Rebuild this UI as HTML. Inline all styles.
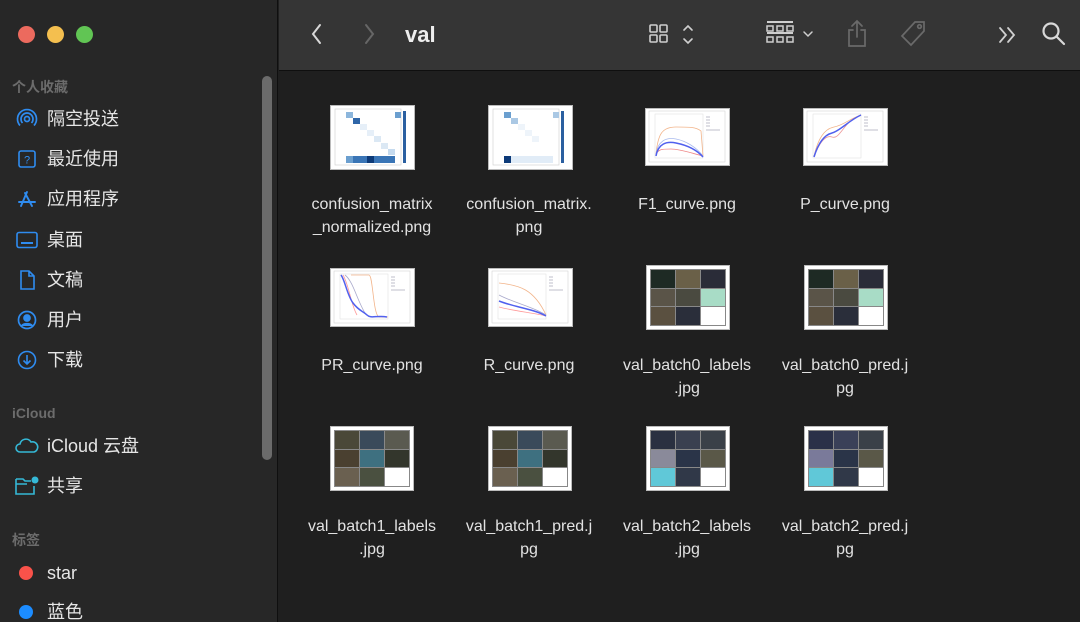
<!DOCTYPE html>
<html><head><meta charset="utf-8"><style>
*{margin:0;padding:0;box-sizing:border-box}
body{width:1080px;height:622px;overflow:hidden;background:#1f1f1f;font-family:"Liberation Sans","Noto Sans CJK SC",sans-serif;position:relative}
#side{position:absolute;left:0;top:0;width:278px;height:622px;background:#272727;border-right:1px solid #0f0f0f}
.tl{position:absolute;top:26px;width:17px;height:17px;border-radius:50%}
.hd{position:absolute;left:12px;font-size:14px;color:#6c6c6c;font-weight:bold}
.it{position:absolute;left:47px;font-size:18px;color:#e6e6e6;line-height:20px}
.ic{position:absolute;left:16px;width:22px;height:22px}
#scroll{position:absolute;left:262px;top:76px;width:10px;height:384px;border-radius:5px;background:#6b6b6b}
#tb{position:absolute;left:279px;top:0;width:801px;height:71px;background:#353535;border-bottom:1px solid #0f0f0f}
.lab{position:absolute;width:160px;text-align:center;font-size:16px;line-height:23px;color:#e2e2e2}
.th{position:absolute;background:#fff;border:1px solid #bbb}
.grid{position:absolute;left:3px;top:3px;right:3px;bottom:3px;display:grid;grid-template-columns:1fr 1fr 1fr;grid-template-rows:1fr 1fr 1fr;gap:1px;background:#888;padding:1px}
.grid div{position:relative}
</style></head><body>
<div id="side">
<div class="tl" style="left:18px;background:#ec6a5e"></div>
<div class="tl" style="left:47px;background:#f4bf4f"></div>
<div class="tl" style="left:76px;background:#61c554"></div>
<div class="hd" style="top:77px">个人收藏</div>
<svg class="ic" style="top:108px" viewBox="0 0 22 22" fill="none" stroke="#2f8cf0" stroke-width="1.7"><circle cx="11" cy="11" r="2.5"/><path d="M6.5 15a6 6 0 1 1 9 0M4 17.5a9.5 9.5 0 1 1 14 0"/></svg>
<div class="it" style="top:109px">隔空投送</div>
<svg class="ic" style="top:148px" viewBox="0 0 22 22" fill="none" stroke="#2f8cf0" stroke-width="1.6"><rect x="3" y="3" width="16" height="16" rx="2"/><text x="11" y="15.5" font-size="11" fill="#2f8cf0" stroke="none" text-anchor="middle" font-family="Liberation Sans">?</text></svg>
<div class="it" style="top:149px">最近使用</div>
<svg class="ic" style="top:188px" viewBox="0 0 22 22" fill="none" stroke="#2f8cf0" stroke-width="1.9" stroke-linecap="round"><path d="M11 4L5 18M9 5l7 13M3 14h16"/></svg>
<div class="it" style="top:189px">应用程序</div>
<svg class="ic" style="top:229px" viewBox="0 0 22 22" fill="none" stroke="#2f8cf0" stroke-width="1.6"><rect x="1" y="3.5" width="20" height="15" rx="2"/><path d="M5 14h12" stroke-width="2"/></svg>
<div class="it" style="top:230px">桌面</div>
<svg class="ic" style="top:269px" viewBox="0 0 22 22" fill="none" stroke="#2f8cf0" stroke-width="1.6"><path d="M5 2h8l5 5v13H5zM13 2v5h5"/></svg>
<div class="it" style="top:270px">文稿</div>
<svg class="ic" style="top:309px" viewBox="0 0 22 22" fill="none" stroke="#2f8cf0" stroke-width="1.7"><circle cx="11" cy="11" r="8.5"/><circle cx="11" cy="9" r="3" fill="#2f8cf0"/><path d="M5.5 17c2-3 9-3 11 0" fill="#2f8cf0"/></svg>
<div class="it" style="top:310px">用户</div>
<svg class="ic" style="top:349px" viewBox="0 0 22 22" fill="none" stroke="#2f8cf0" stroke-width="1.6"><circle cx="11" cy="11" r="8.5"/><path d="M11 6v9M7.5 11.5L11 15l3.5-3.5"/></svg>
<div class="it" style="top:350px">下载</div>
<div class="hd" style="top:405px">iCloud</div>
<svg class="ic" style="top:435px;left:14px;width:26px" viewBox="0 0 26 22" fill="none" stroke="#35b8d6" stroke-width="1.6"><path d="M6 17a4 4 0 0 1 0-8 6 6 0 0 1 11-2 5 5 0 0 1 3 10z"/></svg>
<div class="it" style="top:436px">iCloud 云盘</div>
<svg class="ic" style="top:475px;left:14px;width:26px" viewBox="0 0 26 22" fill="none" stroke="#35b8d6" stroke-width="1.6"><path d="M2 4h7l2 2h6M2 4v15h18v-8M2 9h11"/><circle cx="21" cy="5" r="3.5" fill="#35b8d6" stroke="none"/></svg>
<div class="it" style="top:476px">共享</div>
<div class="hd" style="top:530px">标签</div>
<div style="position:absolute;left:19px;top:566px;width:14px;height:14px;border-radius:50%;background:#f9524a"></div>
<div class="it" style="top:563px">star</div>
<div style="position:absolute;left:19px;top:605px;width:14px;height:14px;border-radius:50%;background:#1c8cff"></div>
<div class="it" style="top:602px">蓝色</div>
<div id="scroll"></div>
</div>
<div id="tb">
<svg style="position:absolute;left:30px;top:22px" width="16" height="24" viewBox="0 0 16 24" fill="none" stroke="#d8d8d8" stroke-width="2" stroke-linecap="round"><path d="M11 3L4 12l7 9"/></svg>
<svg style="position:absolute;left:82px;top:22px" width="16" height="24" viewBox="0 0 16 24" fill="none" stroke="#666" stroke-width="2" stroke-linecap="round"><path d="M5 3l7 9-7 9"/></svg>
<div style="position:absolute;left:126px;top:22px;font-size:22px;font-weight:bold;color:#eee">val</div>
<svg style="position:absolute;left:368px;top:22px" width="52" height="26" viewBox="0 0 52 26" fill="none" stroke="#cfcfcf" stroke-width="1.6"><rect x="3" y="3" width="7" height="7" rx="1"/><rect x="13" y="3" width="7" height="7" rx="1"/><rect x="3" y="13" width="7" height="7" rx="1"/><rect x="13" y="13" width="7" height="7" rx="1"/><path d="M37 8l4-4 4 4M37 17l4 4 4-4" stroke-linecap="round"/></svg>
<svg style="position:absolute;left:485px;top:20px" width="60" height="28" viewBox="0 0 60 28" fill="none" stroke="#cfcfcf" stroke-width="1.5"><path d="M3 2h26M3 13h26" stroke-width="2"/><rect x="3" y="6" width="6" height="5"/><rect x="13" y="6" width="6" height="5"/><rect x="23" y="6" width="6" height="5"/><rect x="3" y="17" width="6" height="5"/><rect x="13" y="17" width="6" height="5"/><rect x="23" y="17" width="6" height="5"/><path d="M40 12l4 4 4-4" stroke-linecap="round"/></svg>
<svg style="position:absolute;left:566px;top:19px" width="24" height="30" viewBox="0 0 24 30" fill="none" stroke="#6a6a6a" stroke-width="1.7" stroke-linecap="round"><path d="M8 11H4v16h16V11h-4M12 2v16M7 7l5-5 5 5"/></svg>
<svg style="position:absolute;left:620px;top:19px" width="30" height="30" viewBox="0 0 30 30" fill="none" stroke="#6a6a6a" stroke-width="1.7"><path d="M16 3h9v9L12 26 3 17z"/><circle cx="20.5" cy="7.5" r="1.8"/></svg>
<svg style="position:absolute;left:718px;top:24px" width="22" height="22" viewBox="0 0 22 22" fill="none" stroke="#d0d0d0" stroke-width="1.8" stroke-linecap="round"><path d="M3 4l6 7-6 7M11 4l6 7-6 7"/></svg>
<svg style="position:absolute;left:762px;top:21px" width="26" height="26" viewBox="0 0 26 26" fill="none" stroke="#d8d8d8" stroke-width="2.2" stroke-linecap="round"><circle cx="10" cy="10" r="7.5"/><path d="M15.5 15.5L23 23"/></svg>
</div>

<!-- Row 1 -->
<div class="th" style="left:330px;top:105px;width:85px;height:65px">
<svg width="83" height="63" viewBox="0 0 83 63"><rect x="4" y="3" width="66" height="56" fill="none" stroke="#ccc" stroke-width=".6"/><rect x="15" y="6" width="7" height="6" fill="#8cb6dc"/><rect x="22" y="12" width="7" height="6" fill="#2f66a8"/><rect x="29" y="18" width="7" height="6" fill="#e6eff8"/><rect x="36" y="24" width="7" height="6" fill="#e6eff8"/><rect x="43" y="30" width="7" height="6" fill="#dbe8f4"/><rect x="50" y="37" width="7" height="6" fill="#dbe8f4"/><rect x="57" y="43" width="7" height="6" fill="#c6dbef"/><rect x="64" y="6" width="6" height="6" fill="#6b9fcf"/><rect x="15" y="50" width="49" height="7" fill="#3a75b6"/><rect x="36" y="50" width="7" height="7" fill="#0d3a78"/><rect x="15" y="50" width="7" height="7" fill="#6b9fcf"/><rect x="72" y="5" width="3" height="52" fill="#2a5fa0"/></svg></div>
<div class="th" style="left:488px;top:105px;width:85px;height:65px">
<svg width="83" height="63" viewBox="0 0 83 63"><rect x="4" y="3" width="66" height="56" fill="none" stroke="#ccc" stroke-width=".6"/><rect x="15" y="6" width="7" height="6" fill="#6b9fcf"/><rect x="22" y="12" width="7" height="6" fill="#aac8e4"/><rect x="29" y="18" width="7" height="6" fill="#eef4fa"/><rect x="36" y="24" width="7" height="6" fill="#eef4fa"/><rect x="43" y="30" width="7" height="6" fill="#eef4fa"/><rect x="64" y="6" width="6" height="6" fill="#aac8e4"/><rect x="15" y="50" width="49" height="7" fill="#e1ecf7"/><rect x="15" y="50" width="7" height="7" fill="#0d3a78"/><rect x="72" y="5" width="3" height="52" fill="#2a5fa0"/></svg></div>
<div class="th" style="left:645px;top:108px;width:85px;height:58px">
<svg width="83" height="56" viewBox="0 0 83 56" fill="none" stroke-width=".8"><rect x="3" y="2" width="76" height="51" stroke="#ccc" stroke-width=".5"/><rect x="9" y="5" width="48" height="44" stroke="#ddd" stroke-width=".5"/><path d="M10 45C12 25 16 18 30 18S50 18 55 22L57 47" stroke="#f2b48a"/><path d="M10 45C12 32 20 28 30 30S50 38 57 47" stroke="#aabbee"/><path d="M10 46C12 40 16 40 25 40S45 44 57 47" stroke="#e88"/><path d="M10 47C12 35 20 32 30 34S50 40 57 48" stroke="#5060ee" stroke-width="1.5"/><path d="M60 8h4M60 11h4M60 14h4M60 17h4M60 21h14" stroke="#aab"/></svg></div>
<div class="th" style="left:803px;top:108px;width:85px;height:58px">
<svg width="83" height="56" viewBox="0 0 83 56" fill="none" stroke-width=".8"><rect x="3" y="2" width="76" height="51" stroke="#ccc" stroke-width=".5"/><rect x="9" y="5" width="48" height="44" stroke="#ddd" stroke-width=".5"/><path d="M10 47C14 30 20 20 30 18S45 10 57 6" stroke="#f2b48a"/><path d="M10 47C14 38 20 25 28 28S40 12 55 7" stroke="#e99"/><path d="M10 48C14 35 20 26 28 24S44 12 57 6" stroke="#5060ee" stroke-width="1.5"/><path d="M60 8h4M60 11h4M60 14h4M60 17h4M60 21h14" stroke="#aab"/></svg></div>
<div class="lab" style="left:292px;top:193px">confusion_matrix<br>_normalized.png</div>
<div class="lab" style="left:449px;top:193px">confusion_matrix.<br>png</div>
<div class="lab" style="left:607px;top:193px">F1_curve.png</div>
<div class="lab" style="left:765px;top:193px">P_curve.png</div>

<!-- Row 2 -->
<div class="th" style="left:330px;top:268px;width:85px;height:59px">
<svg width="83" height="57" viewBox="0 0 83 57" fill="none" stroke-width=".8"><rect x="3" y="2" width="76" height="52" stroke="#ccc" stroke-width=".5"/><rect x="9" y="5" width="48" height="45" stroke="#ddd" stroke-width=".5"/><path d="M20 6h18c4 0 4 40 10 42h9" stroke="#f2b48a"/><path d="M12 6c6 10 8 30 14 40" stroke="#f99"/><path d="M14 6c8 6 12 25 20 38" stroke="#aac"/><path d="M10 6c4 5 6 20 12 28s10 8 14 12 10 0 20 2" stroke="#5060ee" stroke-width="1.5"/><path d="M60 8h4M60 11h4M60 14h4M60 17h4M60 21h14" stroke="#aab"/></svg></div>
<div class="th" style="left:488px;top:268px;width:85px;height:59px">
<svg width="83" height="57" viewBox="0 0 83 57" fill="none" stroke-width=".8"><rect x="3" y="2" width="76" height="52" stroke="#ccc" stroke-width=".5"/><rect x="9" y="5" width="48" height="45" stroke="#ddd" stroke-width=".5"/><path d="M10 14C30 16 45 20 57 46" stroke="#f2b48a"/><path d="M10 26C25 34 45 38 57 46" stroke="#aac"/><path d="M10 38C25 42 45 44 57 47" stroke="#f99"/><path d="M10 32C25 38 45 40 57 47" stroke="#5060ee" stroke-width="1.5"/><path d="M60 8h4M60 11h4M60 14h4M60 17h4M60 21h14" stroke="#aab"/></svg></div>
<div class="th" style="left:646px;top:265px;width:84px;height:65px"><div class="grid">
<div style="background:#1e2a24"></div><div style="background:#6a6048"></div><div style="background:#2a2c38"></div>
<div style="background:#5a5448"></div><div style="background:#4a4a40"></div><div style="background:#a8dcc6"></div>
<div style="background:#5a5040"></div><div style="background:#2a2e3a"></div><div style="background:#fff"></div></div></div>
<div class="th" style="left:804px;top:265px;width:84px;height:65px"><div class="grid">
<div style="background:#1e2a24"></div><div style="background:#6a6048"></div><div style="background:#2a2c38"></div>
<div style="background:#5a5448"></div><div style="background:#4a4a40"></div><div style="background:#a8dcc6"></div>
<div style="background:#5a5040"></div><div style="background:#2a2e3a"></div><div style="background:#fff"></div></div></div>
<div class="lab" style="left:292px;top:354px">PR_curve.png</div>
<div class="lab" style="left:449px;top:354px">R_curve.png</div>
<div class="lab" style="left:607px;top:354px">val_batch0_labels<br>.jpg</div>
<div class="lab" style="left:765px;top:354px">val_batch0_pred.j<br>pg</div>

<!-- Row 3 -->
<div class="th" style="left:330px;top:426px;width:84px;height:65px"><div class="grid">
<div style="background:#4a4838"></div><div style="background:#3a4a5a"></div><div style="background:#5a5a50"></div>
<div style="background:#4a4030"></div><div style="background:#3e7080"></div><div style="background:#33362c"></div>
<div style="background:#6a6050"></div><div style="background:#4a5040"></div><div style="background:#fff"></div></div></div>
<div class="th" style="left:488px;top:426px;width:84px;height:65px"><div class="grid">
<div style="background:#4a4838"></div><div style="background:#3a4a5a"></div><div style="background:#5a5a50"></div>
<div style="background:#4a4030"></div><div style="background:#3e7080"></div><div style="background:#33362c"></div>
<div style="background:#6a6050"></div><div style="background:#4a5040"></div><div style="background:#fff"></div></div></div>
<div class="th" style="left:646px;top:426px;width:84px;height:65px"><div class="grid">
<div style="background:#2a3040"></div><div style="background:#3a4050"></div><div style="background:#3a4048"></div>
<div style="background:#8a8a9a"></div><div style="background:#2a3448"></div><div style="background:#5a5848"></div>
<div style="background:#60c8d8"></div><div style="background:#303848"></div><div style="background:#fff"></div></div></div>
<div class="th" style="left:804px;top:426px;width:84px;height:65px"><div class="grid">
<div style="background:#2a3048"></div><div style="background:#3a4058"></div><div style="background:#3a4048"></div>
<div style="background:#7a7a9a"></div><div style="background:#2a3448"></div><div style="background:#5a5848"></div>
<div style="background:#60c8d8"></div><div style="background:#303848"></div><div style="background:#fff"></div></div></div>
<div class="lab" style="left:292px;top:515px">val_batch1_labels<br>.jpg</div>
<div class="lab" style="left:449px;top:515px">val_batch1_pred.j<br>pg</div>
<div class="lab" style="left:607px;top:515px">val_batch2_labels<br>.jpg</div>
<div class="lab" style="left:765px;top:515px">val_batch2_pred.j<br>pg</div>
</body></html>
